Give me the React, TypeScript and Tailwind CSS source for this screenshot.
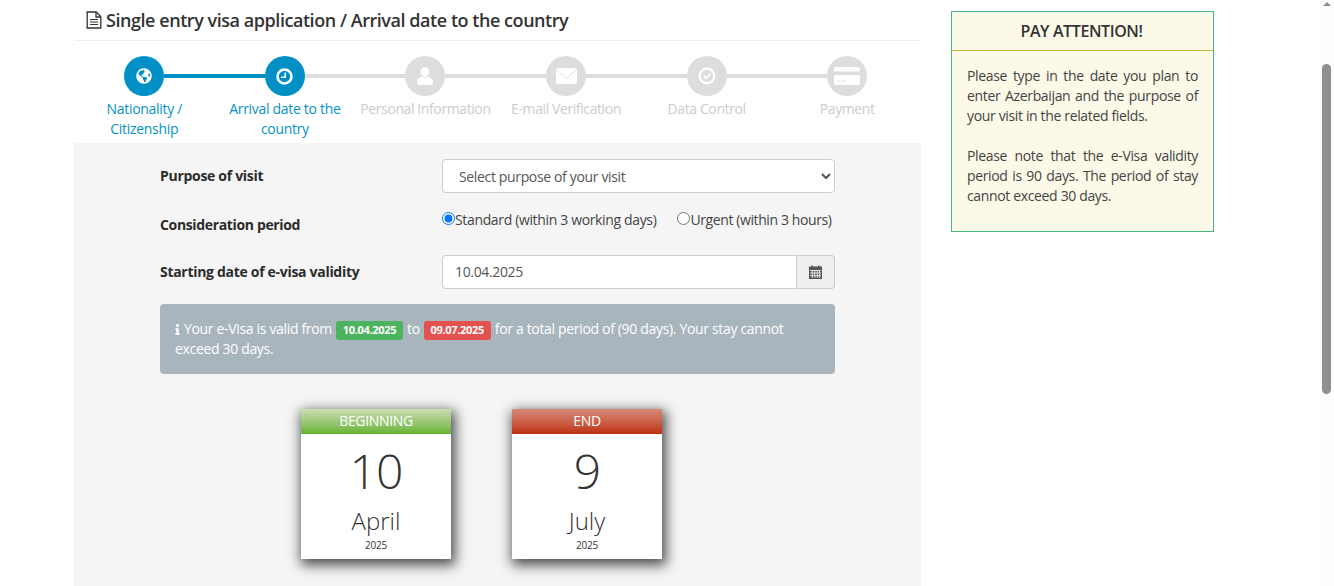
import { FaGlobeAmericas, FaInfo } from 'react-icons/fa';
import type { ReactNode } from 'react';

function FileIcon() {
  return (
    <svg width="16" height="18" viewBox="0 0 16 18" fill="none" stroke="#333333" strokeWidth="1.300">
      <path d="M1.200 1h9l4.600 4.600V17H1.200z" />
      <path d="M10 1v5h4.800" />
      <path d="M4 8.500h8M4 11h8M4 13.500h8" strokeWidth="1.200" />
    </svg>
  );
}

function ClockIcon() {
  return (
    <svg width="17" height="17" viewBox="0 0 17 17">
      <circle cx="8.500" cy="8.500" r="7" fill="none" stroke="white" strokeWidth="2.600" />
      <path d="M9.200 4.500v4.700H5" fill="none" stroke="white" strokeWidth="1.500" />
    </svg>
  );
}

function UserIcon() {
  return (
    <svg width="16" height="18" viewBox="0 0 16 18" fill="white">
      <ellipse cx="8" cy="5" rx="4.300" ry="5" />
      <path d="M5 9.500C3 10.500 0 11.500 0 14.500V16a2 2 0 0 0 2 2h12a2 2 0 0 0 2-2v-1.500c0-3-3-4-5-5-1.500 1.500-4.500 1.500-6 0z" />
    </svg>
  );
}

function EnvelopeIcon() {
  return (
    <svg width="21" height="16" viewBox="0 0 21 16">
      <rect width="21" height="16" rx="2" fill="white" />
      <path d="M0.500 1.800L10.500 10.500L20.500 1.800" fill="none" stroke="#dddddd" strokeWidth="0.900" />
    </svg>
  );
}

function CheckCircleIcon() {
  return (
    <svg width="18" height="18" viewBox="0 0 18 18">
      <circle cx="9" cy="9" r="7.300" fill="none" stroke="white" strokeWidth="2.300" />
      <path d="M5.500 8.800l2.600 2.600 4.500-4.800" fill="none" stroke="white" strokeWidth="2" />
    </svg>
  );
}

function CardIcon() {
  return (
    <svg width="26" height="18" viewBox="0 0 26 18">
      <rect width="26" height="18" rx="2" fill="white" />
      <rect y="4.500" width="26" height="3.500" fill="#dddddd" />
      <path d="M3.500 14h3M8 14h3" stroke="#dddddd" strokeWidth="1" />
    </svg>
  );
}

function CalendarIcon() {
  return (
    <svg width="13" height="14" viewBox="0 0 13 14" fill="none" stroke="#555555" strokeWidth="1">
      <rect x="0.500" y="2" width="12" height="11.500" fill="#555555" />
      <path d="M1 5.500h11M1 8h11M1 10.700h11M3.300 5v8M5.800 5v8M8.300 5v8M10.600 5v8" stroke="#eeeeee" strokeWidth="0.900" />
      <path d="M3.200 0.500v2.500M9.800 0.500v2.500" strokeWidth="1.500" />
    </svg>
  );
}

const steps: { label: ReactNode; icon: ReactNode; active: boolean }[] = [
  { label: <>Nationality /<br />Citizenship</>, icon: <FaGlobeAmericas size={16} color="white" />, active: true },
  { label: <>Arrival date to the<br />country</>, icon: <ClockIcon />, active: true },
  { label: 'Personal Information', icon: <UserIcon />, active: false },
  { label: 'E-mail Verification', icon: <EnvelopeIcon />, active: false },
  { label: 'Data Control', icon: <CheckCircleIcon />, active: false },
  { label: 'Payment', icon: <CardIcon />, active: false },
];

function Stepper() {
  return (
    <div className="grid w-[843.5px] grid-cols-6 pt-[15px]">
      {steps.map((step, i) => (
        <div key={i} className="flex h-[87px] flex-col items-center">
          <div className="flex w-full items-center">
            <div className={`h-1 flex-1 ${i === 0 ? 'bg-transparent' : step.active ? 'bg-[#0090c6]' : 'bg-[#dddddd]'}`} />
            <div className={`flex h-10 w-10 shrink-0 items-center justify-center rounded-full ${step.active ? 'bg-[#0090c6]' : 'bg-[#dddddd]'}`}>
              {step.icon}
            </div>
            <div className={`h-1 flex-1 ${i === 5 ? 'bg-transparent' : i === 0 ? 'bg-[#0090c6]' : 'bg-[#dddddd]'}`} />
          </div>
          <div className={`mt-[3px] text-center text-[14px] leading-[20px] whitespace-nowrap ${step.active ? 'tracking-[-0.3px] text-[#0693c6]' : 'tracking-[-0.4px] text-[#cccccc]'}`}>
            {step.label}
          </div>
        </div>
      ))}
    </div>
  );
}

function DateCard({ title, day, month, header }: { title: string; day: string; month: string; header: string }) {
  return (
    <div className="h-[150px] w-[150px] bg-white text-center text-[#333333] shadow-[2px_4px_12px_2px_rgba(0,0,0,0.7)]">
      <div className={`h-[25px] text-[14px] leading-[24px] tracking-[-0.35px] text-white ${header}`}>{title}</div>
      <div className="mt-[7px] text-[48px] leading-[60px] font-[350] tracking-[-1px]">{day}</div>
      <div className="mt-[4px] text-[24px] leading-[32px] font-[350]">{month}</div>
      <div className="mt-[1px] text-[10px] leading-[14px] tracking-[-0.2px]">2025</div>
    </div>
  );
}

function Form() {
  return (
    <div className="h-[443px] bg-[#f5f5f5] pt-4 pl-[86px]">
      <div className="w-[675px]">
        <div className="flex h-[34px] items-center justify-between">
          <label className="pb-[2px] text-[14px] font-bold tracking-[-0.3px] text-[#2b2b2b]">Purpose of visit</label>
          <select className="h-[34px] w-[393px] rounded-[4px] border border-[#cccccc] bg-white pl-3 text-[14px] tracking-[-0.35px] text-[#555555]">
            <option>Select purpose of your visit</option>
          </select>
        </div>
        <div className="mt-[17px] flex h-[45px] justify-between">
          <label className="mt-[5px] text-[14px] leading-[20px] font-bold tracking-[-0.35px] text-[#2b2b2b]">Consideration period</label>
          <div className="flex w-[393px] gap-[21px] text-[14px] leading-[20px] tracking-[-0.35px] text-[#444444]">
            <label className="flex items-start">
              <input type="radio" name="period" defaultChecked className="mt-[2px] h-[13px] w-[13px]" />
              Standard (within 3 working days)
            </label>
            <label className="flex items-start tracking-[-0.4px]">
              <input type="radio" name="period" className="mt-[2px] h-[13px] w-[13px]" />
              Urgent (within 3 hours)
            </label>
          </div>
        </div>
        <div className="flex h-[34px] items-center justify-between">
          <label className="pb-[2px] text-[14px] font-bold tracking-[-0.3px] text-[#2b2b2b]">Starting date of e-visa validity</label>
          <div className="flex h-[34px] w-[393px]">
            <input
              readOnly
              value="10.04.2025"
              className="min-w-0 flex-1 rounded-l-[4px] border border-[#cccccc] bg-white px-3 pb-[1px] text-[14px] tracking-[-0.35px] text-[#555555]"
            />
            <div className="flex w-[38px] items-center justify-center rounded-r-[4px] border border-l-0 border-[#cccccc] bg-[#eeeeee]">
              <CalendarIcon />
            </div>
          </div>
        </div>
        <div className="mt-[15px] h-[70px] rounded-[4px] bg-[#a9b5bc] p-[15px] text-[14px] leading-[20px] tracking-[-0.33px] text-white">
          <div className="flex h-5 items-center gap-[4px]">
            <FaInfo className="h-[11px] w-[5px]" />
            <span>Your e-Visa is valid from</span>
            <span className="mt-[2px] h-[19px] w-[67px] rounded-[3px] bg-[#4cb35f] text-center text-[11px] leading-[18px] font-bold tracking-[-0.3px]">10.04.2025</span>
            <span>to</span>
            <span className="mt-[2px] h-[19px] w-[67px] rounded-[3px] bg-[#e4524f] text-center text-[11px] leading-[18px] font-bold tracking-[-0.3px]">09.07.2025</span>
            <span>for a total period of (90 days). Your stay cannot</span>
          </div>
          <div>exceed 30 days.</div>
        </div>
        <div className="mt-[35px] flex gap-[61px] pl-[141px]">
          <DateCard title="BEGINNING" day="10" month="April" header="bg-gradient-to-b from-[#cfdcb4] to-[#65b32e]" />
          <DateCard title="END" day="9" month="July" header="bg-gradient-to-b from-[#d48a78] to-[#bf2e0a]" />
        </div>
      </div>
    </div>
  );
}

function Notice() {
  return (
    <aside className="mt-[11px] ml-[30px] h-[221px] w-[263px] border border-[#46b68a] bg-[#fcf9e8] text-[#444444]">
      <div className="h-[39px] border-b border-[#c8b53a] pr-[2px] text-center text-[16px] leading-[38px] font-semibold tracking-[-0.4px] text-[#333333]">
        PAY ATTENTION!
      </div>
      <div className="px-[15px] pt-[15px] text-justify text-[14px] leading-[20px] tracking-[-0.35px]">
        <p>Please type in the date you plan to enter Azerbaijan and the purpose of your visit in the related fields.</p>
        <p className="mt-5">Please note that the e-Visa validity period is 90 days. The period of stay cannot exceed 30 days.</p>
      </div>
    </aside>
  );
}

function Scrollbar() {
  return (
    <div className="flex h-full w-[15px] flex-col items-center bg-[#fdfdfd] pt-[2px]">
      <div className="h-0 w-0 border-x-[4px] border-b-[4px] border-x-transparent border-b-[#8a8a8a]" />
      <div className="mt-[58px] h-[330px] w-[9px] rounded-full bg-[#8f8f8f]" />
    </div>
  );
}

export default function App() {
  return (
    <div className="flex h-[586px] w-[1334px] overflow-hidden bg-white font-['Open_Sans','Noto_Sans',sans-serif]">
      <div className="flex w-[1319px] items-start pl-[74px]">
        <main className="w-[847px]">
          <h1 className="flex h-[41px] items-center gap-[4px] border-b border-[#eeeeee] pl-[12px] text-[18px] font-semibold tracking-[-0.45px] text-[#333333]">
            <FileIcon />
            Single entry visa application / Arrival date to the country
          </h1>
          <Stepper />
          <Form />
        </main>
        <Notice />
      </div>
      <Scrollbar />
    </div>
  );
}
